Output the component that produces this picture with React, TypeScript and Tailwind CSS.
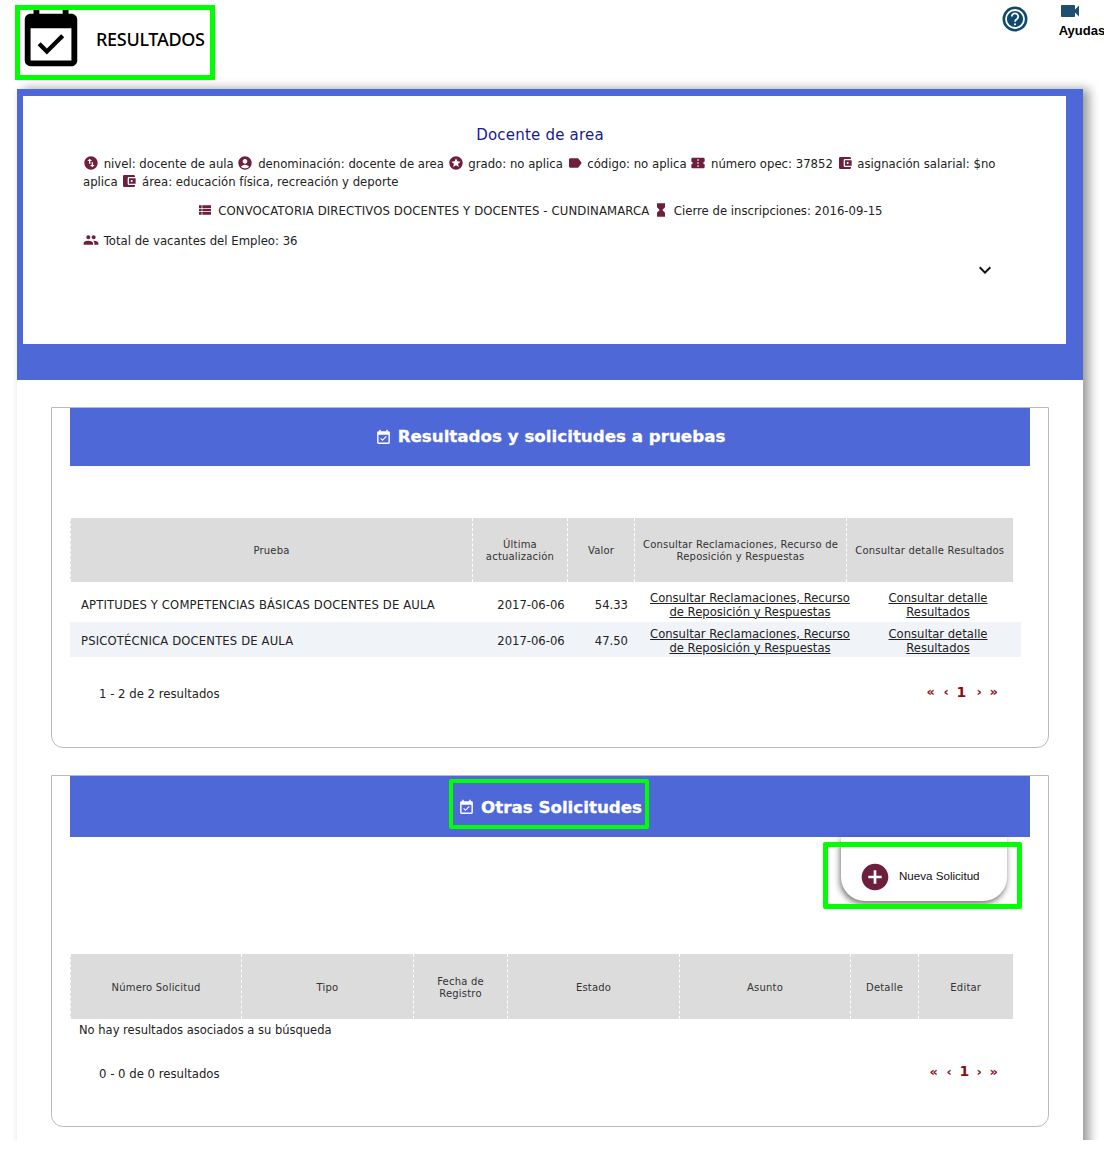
import type { ReactNode } from 'react';
import {
  MdAccountBalanceWallet,
  MdAccountCircle,
  MdAddCircle,
  MdConfirmationNumber,
  MdEventAvailable,
  MdExpandMore,
  MdHourglassFull,
  MdLabel,
  MdPeople,
  MdStars,
  MdSwapVerticalCircle,
  MdVideocam,
  MdViewList,
} from 'react-icons/md';

const results = [
  { name: 'APTITUDES Y COMPETENCIAS BÁSICAS DOCENTES DE AULA', date: '2017-06-06', value: '54.33' },
  { name: 'PSICOTÉCNICA DOCENTES DE AULA', date: '2017-06-06', value: '47.50' },
];

function Meta({ icon, children }: { icon: ReactNode; children: ReactNode }) {
  return (
    <>
      <span className="mr-[4.7px] inline-block h-[12px] align-[-1px] text-[16px] text-[#6e1f3c] [&>svg]:-mt-[2px]">{icon}</span>
      {children}{' '}
    </>
  );
}

function Pager({ className, oneClass }: { className: string; oneClass: string }) {
  return (
    <div className={`flex items-center font-bold text-[#8b0d1a] ${className}`}>
      <span className="w-[17px] text-[13px]">«</span>
      <span className="w-[13px] text-[13px]">‹</span>
      <span className={`text-[14px] ${oneClass}`}>1</span>
      <span className="w-[13px] text-[13px]">›</span>
      <span className="text-[13px]">»</span>
    </div>
  );
}

function PanelTitle({ title, className }: { title: string; className: string }) {
  return (
    <div className={`flex items-center justify-center gap-[6px] bg-[#4f68d8] text-[16.7px] font-bold text-white [-webkit-text-stroke:0.3px_#fff] ${className}`}>
      <MdEventAvailable className="text-[17px]" />
      {title}
    </div>
  );
}

function HeadCell({ className, children }: { className: string; children: ReactNode }) {
  return (
    <th className={`border-l border-dashed border-white px-[5px] pt-[2px] text-center text-[10px] leading-[12px] font-normal tracking-[0.2px] text-[#333] ${className}`}>
      {children}
    </th>
  );
}

export default function App() {
  return (
    <div className="relative h-[1140px] w-[1104px] overflow-hidden bg-white font-['DejaVu_Sans',sans-serif] text-[11.6px] text-[#222]">
      {/* top bar */}
      <header className="flex h-[89px] items-start">
        <MdEventAvailable className="mt-[5px] ml-[16px] shrink-0 text-[70px] text-black" />
        <h1 className="mt-[27px] ml-[10px] shrink-0 font-['Noto_Sans',sans-serif] text-[18px] leading-[24px] font-medium tracking-[-0.3px] text-black">RESULTADOS</h1>
        <svg className="mt-[6px] ml-[797px] h-[26px] w-[26px] shrink-0" viewBox="0 0 26 26">
          <circle cx="13" cy="13" r="12.5" fill="#0f4a6e" />
          <circle cx="13" cy="13" r="9" fill="none" stroke="#fff" strokeWidth="1.8" />
          <path d="M9.8 10.6a3.2 3.2 0 1 1 4.9 2.7c-1 .7-1.7 1.2-1.7 2.5" fill="none" stroke="#fff" strokeWidth="1.8" />
          <circle cx="13" cy="18.3" r="1.1" fill="#fff" />
        </svg>
        <div className="ml-[31px] flex shrink-0 flex-col items-start">
          <MdVideocam className="-mt-[1px] ml-[-1px] text-[24px] text-[#1f4e6e]" />
          <span className="-mt-[2px] font-['Liberation_Sans',sans-serif] text-[13px] font-bold text-black">Ayudas</span>
        </div>
      </header>

      <main className="ml-[17px] h-[1100px] w-[1066px] bg-white shadow-[6px_0_10px_rgba(0,0,0,0.4)]">
        {/* job summary */}
        <section className="bg-[#4f68d8] pt-[7px] pr-[17px] pb-[36px] pl-[6px]">
          <div className="h-[248px] bg-white pt-[29px] pr-[69px] pl-[60px] text-[11.7px]">
            <h2 className="text-center text-[15px] leading-[20px] tracking-[0.2px] text-[#1a1a8c]">Docente de area</h2>
            <p className="mt-[11px] leading-[17.5px]">
              <Meta icon={<MdSwapVerticalCircle />}>nivel: docente de aula</Meta>
              <Meta icon={<MdAccountCircle />}>denominación: docente de area</Meta>
              <Meta icon={<MdStars />}>grado: no aplica</Meta>
              <Meta icon={<MdLabel />}>código: no aplica</Meta>
              <Meta icon={<MdConfirmationNumber />}>número opec: 37852</Meta>
              <Meta icon={<MdAccountBalanceWallet />}>
                <span>asignación salarial: $no</span> <span>aplica</span>
              </Meta>
              <Meta icon={<MdAccountBalanceWallet />}>área: educación física, recreación y deporte</Meta>
            </p>
            <p className="mt-[12px] text-center leading-[17.5px]">
              <Meta icon={<MdViewList />}>
                <span className="tracking-[0.12px]">CONVOCATORIA DIRECTIVOS DOCENTES Y DOCENTES - CUNDINAMARCA</span>
              </Meta>
              <Meta icon={<MdHourglassFull />}>Cierre de inscripciones: 2016-09-15</Meta>
            </p>
            <p className="mt-[12px] leading-[17.5px]">
              <Meta icon={<MdPeople />}>Total de vacantes del Empleo: 36</Meta>
            </p>
            <div className="mt-[8px] flex justify-end">
              <MdExpandMore className="text-[24px] text-[#111]" />
            </div>
          </div>
        </section>

        {/* test results */}
        <section className="mx-[34px] mt-[27px] h-[341px] rounded-b-[12px] border border-[#bbb] px-[18px]">
          <PanelTitle title="Resultados y solicitudes a pruebas" className="h-[58px]" />
          <table className="mt-[52px] w-[942px] table-fixed bg-[#dcdcdc]">
            <thead>
              <tr className="h-[64px]">
                <HeadCell className="w-[402px]">Prueba</HeadCell>
                <HeadCell className="w-[95px]">Última actualización</HeadCell>
                <HeadCell className="w-[67px]">Valor</HeadCell>
                <HeadCell className="w-[212px]">Consultar Reclamaciones, Recurso de Reposición y Respuestas</HeadCell>
                <HeadCell className="w-[166px]">Consultar detalle Resultados</HeadCell>
              </tr>
            </thead>
          </table>
          <div className="mt-[5px] w-[951px]">
            {results.map((row, i) => (
              <div
                key={row.name}
                className={`grid h-[35px] grid-cols-[420px_82px_70px_216px_163px] items-center leading-[14px] ${i % 2 === 1 ? 'bg-[#f0f4f9] pt-[2px]' : ''}`}
              >
                <span className="pl-[11px] tracking-[0.15px]">{row.name}</span>
                <span className="text-center">{row.date}</span>
                <span className="pr-[14px] text-right">{row.value}</span>
                <a className="text-center underline">
                  Consultar Reclamaciones, Recurso
                  <br />
                  de Reposición y Respuestas
                </a>
                <a className="pr-[3px] text-center underline">
                  Consultar detalle
                  <br />
                  Resultados
                </a>
              </div>
            ))}
          </div>
          <div className="mt-[28px] flex h-[20px] items-center justify-between pr-[32px] pl-[29px] text-[11.7px]">
            <span>1 - 2 de 2 resultados</span>
            <Pager className="-mt-[6px]" oneClass="w-[20px]" />
          </div>
        </section>

        {/* other requests */}
        <section className="relative mx-[34px] mt-[27px] h-[352px] rounded-b-[12px] border border-[#bbb] px-[18px]">
          <PanelTitle title="Otras Solicitudes" className="h-[61px] pt-[2px]" />
          <div className="mr-[23px] flex justify-end">
            <button className="flex h-[64px] w-[166px] items-start gap-[8px] rounded-b-[24px] bg-white pt-[24px] pl-[18px] shadow-[-1px_3px_6px_rgba(0,0,0,0.55)]">
              <MdAddCircle className="text-[32px] text-[#6e1f3c]" />
              <span className="mt-[7px] font-['Liberation_Sans',sans-serif] text-[11.6px] leading-[16px] text-[#111]">Nueva Solicitud</span>
            </button>
          </div>
          <table className="mt-[53px] w-[942px] table-fixed bg-[#dcdcdc]">
            <thead>
              <tr className="h-[65px]">
                <HeadCell className="w-[171px]">Número Solicitud</HeadCell>
                <HeadCell className="w-[172px]">Tipo</HeadCell>
                <HeadCell className="w-[94px]">Fecha de Registro</HeadCell>
                <HeadCell className="w-[172px]">Estado</HeadCell>
                <HeadCell className="w-[171px]">Asunto</HeadCell>
                <HeadCell className="w-[68px]">Detalle</HeadCell>
                <HeadCell className="w-[94px]">Editar</HeadCell>
              </tr>
            </thead>
          </table>
          <p className="mt-[3px] pl-[9px] text-[11.5px] leading-[17px]">No hay resultados asociados a su búsqueda</p>
          <div className="mt-[26px] flex h-[20px] items-center justify-between pr-[32px] pl-[29px] text-[11.7px]">
            <span>0 - 0 de 0 resultados</span>
            <Pager className="-mt-[7px]" oneClass="w-[17px]" />
          </div>
        </section>
      </main>

      {/* green highlight boxes drawn over the capture */}
      <div className="absolute top-[5px] left-[15px] h-[75px] w-[200px] border-[5px] border-[#00ff00]" />
      <div className="absolute top-[779px] left-[449px] h-[50px] w-[200px] rounded-[2px] border-[4px] border-[#00ff00]" />
      <div className="absolute top-[842px] left-[823px] h-[67px] w-[199px] rounded-[2px] border-[5px] border-[#00ff00]" />
    </div>
  );
}
